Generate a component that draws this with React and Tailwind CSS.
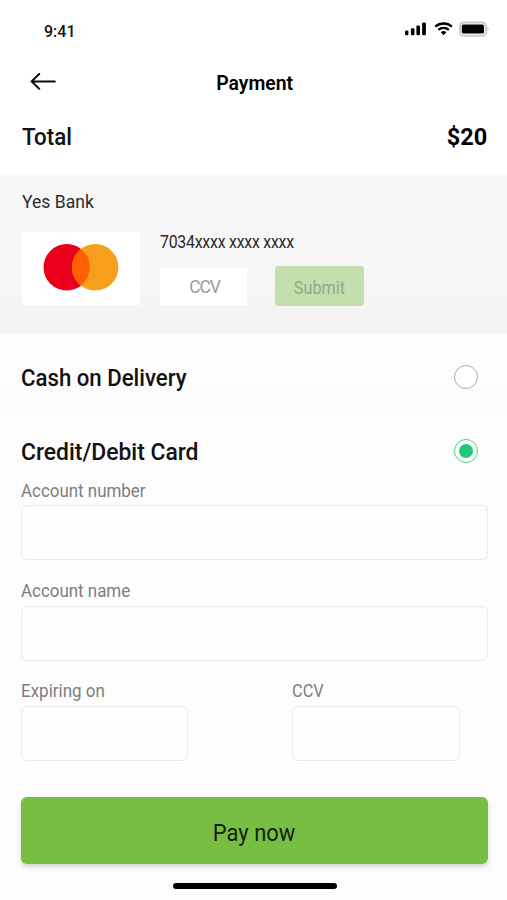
import React, { useState } from 'react';

function StatusIcons() {
  return (
    <svg width="86" height="18" viewBox="0 0 86 18" fill="none">
      {/* Signal */}
      <rect x="2" y="10.6" width="3.4" height="4.6" rx="1.2" fill="#000" />
      <rect x="7.9" y="8.2" width="3.6" height="7" rx="1.2" fill="#000" />
      <rect x="13.4" y="5.4" width="3.6" height="9.8" rx="1.2" fill="#000" />
      <rect x="19.1" y="2.4" width="3.8" height="12.8" rx="1.2" fill="#000" />
      {/* Wifi */}
      <path d="M32.3 6.6a12.6 12.6 0 0 1 16.6 0" stroke="#000" strokeWidth="2.4" />
      <path d="M35.3 9.9a8 8 0 0 1 10.6 0" stroke="#000" strokeWidth="2.2" />
      <path d="M40.6 15.2l-2.8-2.9a4 4 0 0 1 5.6 0z" fill="#000" />
      {/* Battery */}
      <rect x="57" y="2.4" width="26" height="13.4" rx="3.8" fill="#fff" stroke="#cbcbcb" strokeWidth="2" />
      <rect x="58.8" y="4.4" width="22.2" height="9.2" rx="1.6" fill="#000" />
      <path d="M84.4 7.2c1.6.4 1.6 3.2 0 3.6z" fill="#b5b5b5" />
    </svg>
  );
}

function BackArrow() {
  return (
    <svg width="26" height="18" viewBox="0 0 26 18" fill="none" stroke="#0a0a0a" strokeWidth="2" strokeLinecap="round" strokeLinejoin="round">
      <path d="M1.6 9.4H24.8M9.2 2L1.6 9.4L9.2 16.8" />
    </svg>
  );
}

function CardLogo() {
  return (
    <svg width="118" height="73" viewBox="0 0 118 73">
      <circle cx="44.7" cy="35.3" r="23.2" fill="#eb001b" />
      <circle cx="73.2" cy="35.3" r="23.2" fill="#f79e1b" />
      <path d="M58.95 17a23.2 23.2 0 0 1 0 36.6a23.2 23.2 0 0 1 0-36.6z" fill="#ff5f00" />
    </svg>
  );
}

function Radio({ checked, onClick }) {
  return (
    <button
      onClick={onClick}
      className={
        checked
          ? 'flex size-6 items-center justify-center rounded-full border-[1.5px] border-[#4fd08f] bg-white'
          : 'flex size-6 items-center justify-center rounded-full border-[1.5px] border-[#aaaaaa] bg-white'
      }
    >
      {checked && <span className="size-3.5 rounded-full bg-[#1fc876]" />}
    </button>
  );
}

function Field({ label, className, labelClass }) {
  return (
    <label className={`block ${className}`}>
      <span className={`block w-fit origin-left text-[18px] leading-[24px] text-[#7d7d7d] ${labelClass}`}>{label}</span>
      <input className="block h-[55px] w-full rounded-md border-[1.5px] border-[#e9e9e9] bg-[#fdfdfd] px-3 outline-none" />
    </label>
  );
}

export default function App() {
  const [method, setMethod] = useState('card');

  return (
    <div className="flex h-[900px] w-[507px] flex-col overflow-hidden bg-[#fdfdfd] font-['Roboto','Liberation_Sans',sans-serif] text-[#111111]">
      {/* Header */}
      <header className="h-[174px] bg-white">
        <div className="flex h-[60px] items-center justify-between pl-11 pr-[18px] pt-[3px]">
          <span className="text-[16px] font-medium leading-6">9:41</span>
          <div className="mb-1.5"><StatusIcons /></div>
        </div>
        <div className="grid h-[46px] grid-cols-[1fr_auto_1fr] items-center pl-[30px] pr-[27px]">
          <button className="-mt-1 w-fit"><BackArrow /></button>
          <h1 className="scale-x-[0.97] text-[20px] font-semibold leading-6 text-black">Payment</h1>
        </div>
        <div className="flex h-[62px] items-center justify-between pl-[22px] pr-5">
          <span className="origin-left scale-x-[0.93] text-[24px] font-medium leading-8">Total</span>
          <span className="origin-right scale-x-[0.98] text-[24px] font-bold leading-8 text-black">$20</span>
        </div>
      </header>

      {/* Saved card */}
      <section className="h-[159px] bg-gradient-to-b from-[#f7f7f7] from-60% to-[#f3f3f3] pl-[22px] pt-4">
        <h2 className="w-fit origin-left scale-x-[0.925] text-[19px] leading-6 text-[#2b2b2b]">Yes Bank</h2>
        <div className="mt-[18px] flex">
          <div className="h-[73px] w-[118px] bg-white">
            <CardLogo />
          </div>
          <div className="ml-5">
            <p className="-mt-0.5 w-fit origin-left scale-x-[0.88] text-[18px] leading-6 tracking-[-0.25px] text-[#2b2b2b]">7034xxxx xxxx xxxx</p>
            <div className="mt-3 flex items-center">
              <input placeholder="CCV" className="h-[37px] w-[87px] bg-white pl-0.5 pt-0.5 text-center text-[17.5px] tracking-[-1.2px] outline-none placeholder:text-[#9b9b9b]" />
              <button className="ml-7 h-10 w-[89px] rounded-[3px] bg-[#c3e0ac] pt-0.5 text-[18px] text-[#93a78f]">
                <span className="inline-block scale-x-[0.9]">Submit</span>
              </button>
            </div>
          </div>
        </div>
      </section>

      {/* Payment methods */}
      <section className="flex h-[83px] items-center justify-between bg-gradient-to-b from-[#fdfdfd] from-50% to-[#fafafa] pb-0 pl-[21px] pr-[29px] pt-[5px]">
        <h2 className="origin-left scale-x-[0.925] pt-px text-[24px] font-medium leading-8">Cash on Delivery</h2>
        <Radio checked={method === 'cash'} onClick={() => setMethod('cash')} />
      </section>

      <section className="px-[21px] pt-[19px]">
        <div className="flex h-8 items-center justify-between pr-2">
          <h2 className="origin-left scale-x-[0.953] pt-0.5 text-[24px] font-medium leading-8">Credit/Debit Card</h2>
          <Radio checked={method === 'card'} onClick={() => setMethod('card')} />
        </div>
        <Field label="Account number" className="mt-3 w-[467px]" labelClass="mb-0.5 scale-x-[0.94]" />
        <Field label="Account name" className="mt-[19px] w-[467px]" labelClass="mb-[3px] scale-x-[0.94]" />
        <div className="mt-[18px] flex gap-[104px]">
          <Field label="Expiring on" className="w-[167px]" labelClass="mb-[3px] scale-x-[0.945]" />
          <Field label="CCV" className="w-[168px]" labelClass="mb-[3px] scale-x-[0.91]" />
        </div>
        <button className="mt-9 h-[67px] w-[467px] rounded-md bg-[#77be43] pt-1 text-[24px] text-[#13230a] shadow-[0_3px_5px_rgba(0,0,0,0.16)]">
          <span className="inline-block scale-x-[0.915]">Pay now</span>
        </button>
      </section>

      <div className="ml-[173px] mt-[18.5px] h-1.5 w-[164px] rounded-full bg-black" />
    </div>
  );
}
